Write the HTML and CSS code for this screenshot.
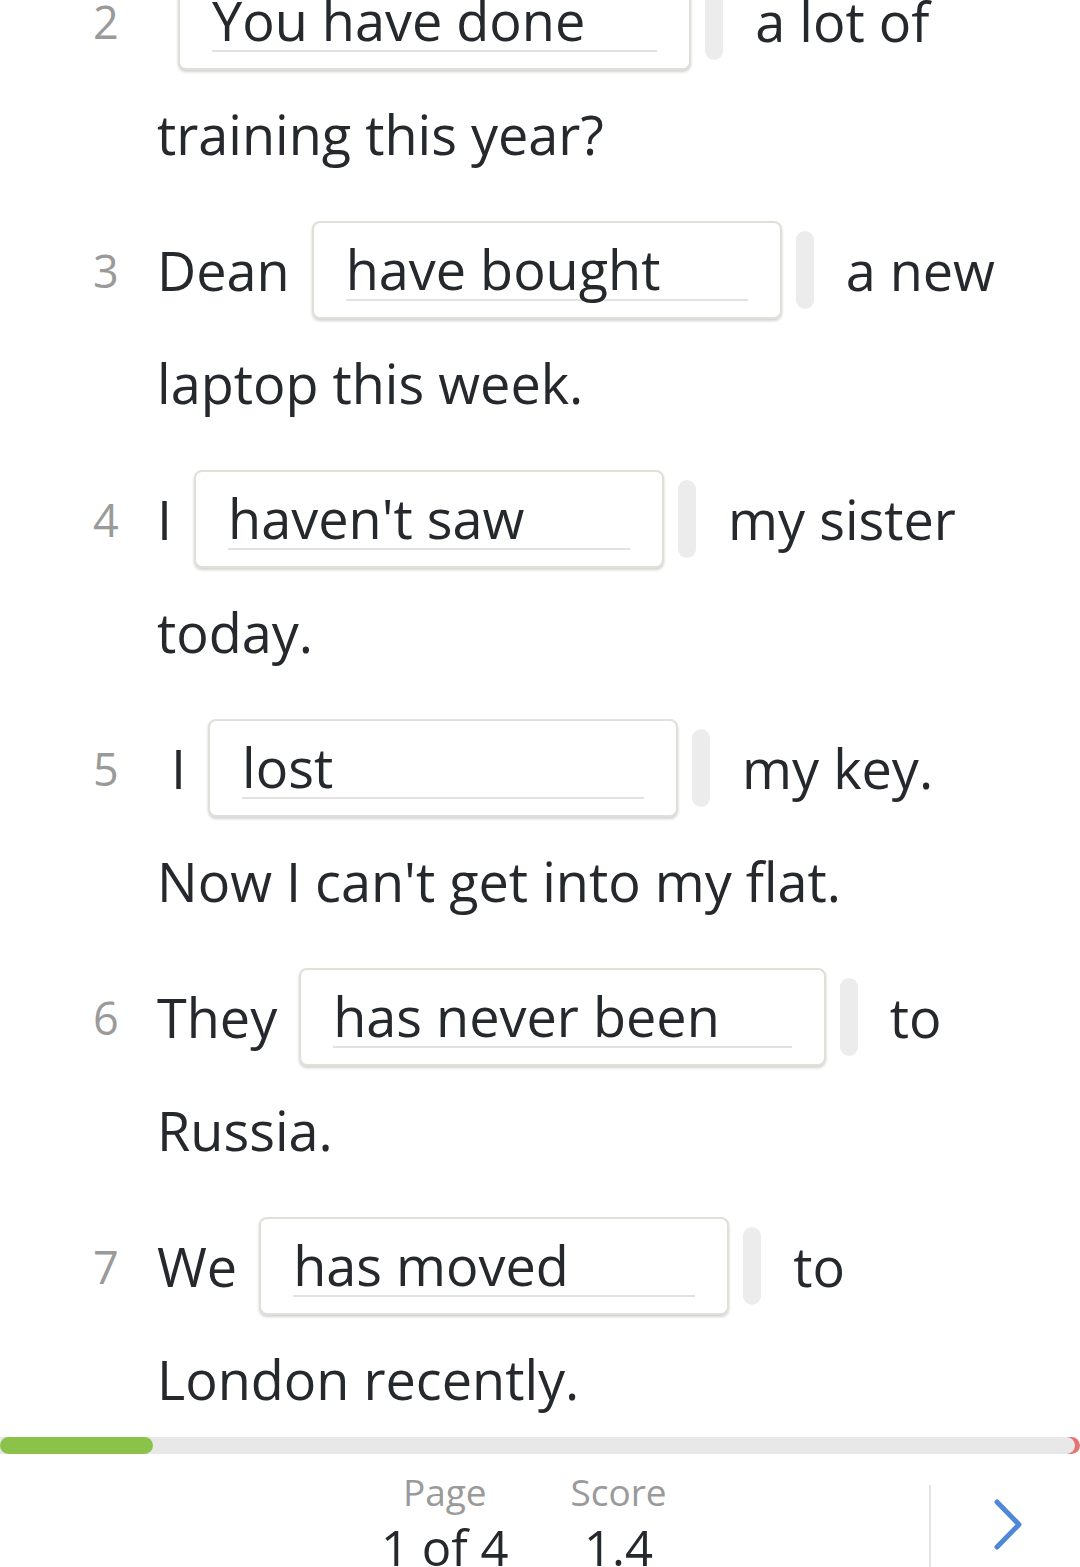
FILE: index.html
```html
<!DOCTYPE html>
<html>
<head>
<meta charset="utf-8">
<link rel="stylesheet" href="styles.css">
</head>
<body>
<div class="page">
  <main class="list">
    <div class="item">
      <div class="line1">
        <span class="num">2</span>
        <span class="box box-first"><span class="ans">You have done</span></span>
        <span class="handle"></span>
        <span class="post">a lot of</span>
      </div>
      <div class="line2">training this year?</div>
    </div>
    <div class="item">
      <div class="line1">
        <span class="num">3</span>
        <span class="pre">Dean</span>
        <span class="box"><span class="ans">have bought</span></span>
        <span class="handle"></span>
        <span class="post">a new</span>
      </div>
      <div class="line2">laptop this week.</div>
    </div>
    <div class="item">
      <div class="line1">
        <span class="num">4</span>
        <span class="pre">I</span>
        <span class="box"><span class="ans">haven't saw</span></span>
        <span class="handle"></span>
        <span class="post">my sister</span>
      </div>
      <div class="line2">today.</div>
    </div>
    <div class="item">
      <div class="line1">
        <span class="num">5</span>
        <span class="pre pre-indent">I</span>
        <span class="box"><span class="ans">lost</span></span>
        <span class="handle"></span>
        <span class="post">my key.</span>
      </div>
      <div class="line2">Now I can't get into my flat.</div>
    </div>
    <div class="item">
      <div class="line1">
        <span class="num">6</span>
        <span class="pre">They</span>
        <span class="box"><span class="ans">has never been</span></span>
        <span class="handle"></span>
        <span class="post">to</span>
      </div>
      <div class="line2">Russia.</div>
    </div>
    <div class="item">
      <div class="line1">
        <span class="num">7</span>
        <span class="pre">We</span>
        <span class="box"><span class="ans">has moved</span></span>
        <span class="handle"></span>
        <span class="post">to</span>
      </div>
      <div class="line2">London recently.</div>
    </div>
  </main>
  <div class="progress">
    <div class="track"><div class="fill" style="width:153px"></div></div>
  </div>
  <footer class="footer">
    <div class="stats">
      <div class="stat">
        <div class="label">Page</div>
        <div class="value">1 of 4</div>
      </div>
      <div class="stat">
        <div class="label">Score</div>
        <div class="value">1.4</div>
      </div>
    </div>
    <div class="divider"></div>
    <div class="next">
      <svg width="40" height="60" viewBox="0 0 40 60"><polyline points="9,7 31,29.5 9,52" fill="none" stroke="#4f88d9" stroke-width="5" stroke-linecap="round" stroke-linejoin="round"/></svg>
    </div>
  </footer>
</div>
</body>
</html>
```
FILE: styles.css
```css
html, body {
  margin: 0;
  padding: 0;
  background: #ffffff;
}
body {
  width: 1080px;
  height: 1567px;
  overflow: hidden;
  font-family: "Open Sans", "Noto Sans", sans-serif;
  color: #25292d;
}
.page {
  display: flex;
  flex-direction: column;
  height: 1567px;
}
.list {
  flex: none;
  height: 1437px;
  overflow: hidden;
  display: flex;
  flex-direction: column;
  gap: 23px;
}
.list .item:first-child {
  margin-top: -28px;
}
.item {
  flex: none;
  padding-left: 93px;
}
.line1 {
  display: flex;
  align-items: center;
  height: 98px;
  font-size: 54px;
  white-space: nowrap;
}
.num {
  width: 64px;
  flex: none;
  font-size: 45px;
  color: #9a9a9a;
}
.pre {
  margin-right: 22px;
}
.pre-indent {
  padding-left: 14px;
}
.box {
  box-sizing: border-box;
  height: 98px;
  min-width: 470px;
  padding: 0 32px;
  border: 2px solid #dfe1d8;
  border-radius: 8px;
  box-shadow: 0 2px 3px rgba(0, 0, 0, 0.18);
  display: flex;
  align-items: center;
  background: #fff;
}
.box-first {
  margin-left: 21px;
}
.ans {
  flex: 1;
  line-height: 60px;
  padding-right: 72px;
  border-bottom: 2px solid #e2e2e2;
  margin-top: 0;
}
.handle {
  width: 18px;
  height: 78px;
  border-radius: 9px;
  background: #ececec;
  margin-left: 14px;
  margin-right: 32px;
  flex: none;
}
.line2 {
  padding-left: 64px;
  font-size: 54px;
  line-height: 128px;
  white-space: nowrap;
}
.progress {
  height: 17px;
  flex: none;
  background: #e57373;
  border-radius: 0 9px 9px 0;
}
.track {
  height: 17px;
  width: 1075px;
  background: #e8e8e8;
  border-radius: 0 9px 9px 0;
}
.fill {
  height: 17px;
  background: #8bc34a;
  border-radius: 9px;
}
.footer {
  flex: 1;
  display: flex;
  align-items: stretch;
}
.stats {
  display: flex;
  gap: 62px;
  margin-left: 381px;
  padding-top: 16px;
}
.stat {
  display: flex;
  flex-direction: column;
  align-items: center;
}
.label {
  font-size: 37px;
  line-height: 44px;
  color: #9a9a9a;
}
.value {
  font-size: 49px;
  line-height: 66px;
  color: #25292d;
}
.divider {
  margin-left: auto;
  margin-top: 31px;
  width: 2px;
  background: #e4e4e4;
}
.next {
  width: 149px;
  display: flex;
  justify-content: center;
  align-items: flex-start;
  padding-top: 41px;
}
.next svg {
  margin-left: 4px;
}
```
